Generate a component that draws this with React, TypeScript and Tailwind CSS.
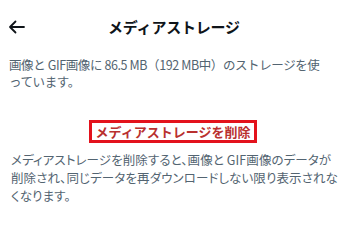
export default function App() {
  return (
    <div className="w-[340px] h-[229px] bg-white overflow-hidden" style={{ fontFamily: '"Noto Sans CJK JP", "Noto Sans", sans-serif' }}>
      {/* header */}
      <div className="relative flex items-center justify-center h-[56px] pl-[8px]">
        <svg className="absolute left-[8px] top-[20px]" width="17" height="14" viewBox="0 0 17 14" fill="none" stroke="#0f1419" strokeWidth="1.8" strokeLinecap="round" strokeLinejoin="round">
          <path d="M16 7H2M7.5 1.5L2 7l5.5 5.5" />
        </svg>
        <div className="text-[15px] font-bold text-[#0f1419] tracking-[-0.2px] -mt-[2px]">メディアストレージ</div>
      </div>
      <p className="px-[9px] text-[12.5px] leading-[17px] text-[#536471] tracking-[-0.4px]">
        画像と GIF画像に 86.5 MB（192 MB中）のストレージを使っています。
      </p>
      <div className="flex justify-center mt-[30px] pl-[6px]">
        <div className="border-[3px] border-[#e3121c] px-[4px] h-[23px] flex items-center text-[13px] font-bold text-[#b9302f]">
          メディアストレージを削除
        </div>
      </div>
      <p className="mt-[8px] pl-[11px] whitespace-nowrap text-[12.5px] leading-[18px] text-[#536471] tracking-[0.1px] [font-feature-settings:'palt']">
        メディアストレージを削除すると、画像と GIF画像のデータが
        <br />
        削除され、同じデータを再ダウンロードしない限り表示されな
        <br />
        くなります。
      </p>
    </div>
  );
}
